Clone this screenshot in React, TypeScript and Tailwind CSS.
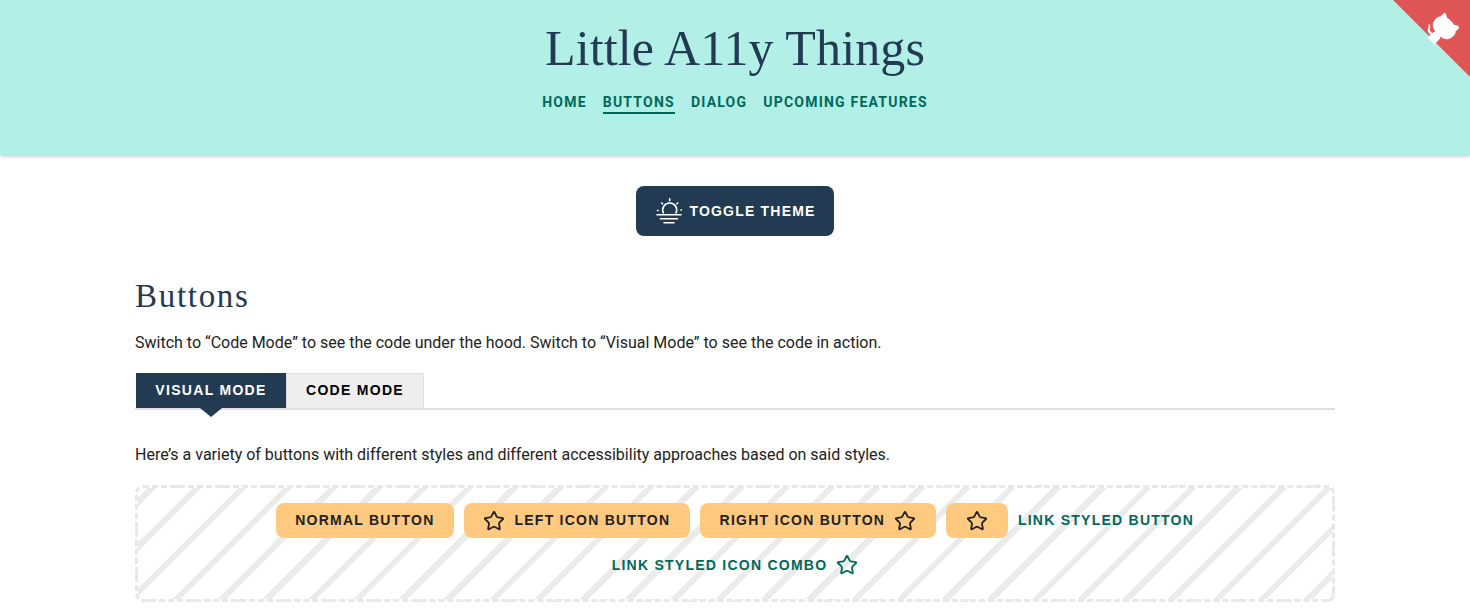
import { Star } from 'lucide-react';

const navItems = [
  { label: 'Home', active: false },
  { label: 'Buttons', active: true },
  { label: 'Dialog', active: false },
  { label: 'Upcoming Features', active: false },
];

function GithubCorner() {
  return (
    <svg viewBox="0 0 250 250" className="absolute top-0 right-0 w-[80px] h-[80px] fill-[#e05555] text-white">
      <path d="M9.4,0 L250,240.6 L250,0 Z" />
      <path
        fill="currentColor"
        d="M128.3,109.0 C113.8,99.7 119.0,89.6 119.0,89.6 C122.0,82.7 120.5,78.6 120.5,78.6 C119.2,72.0 123.4,76.3 123.4,76.3 C127.3,80.9 125.5,87.3 125.5,87.3 C122.9,97.6 130.6,101.9 134.4,103.2"
      />
      <path
        fill="currentColor"
        d="M115.0,115.0 C114.9,115.1 118.7,116.5 119.8,115.4 L133.7,101.6 C136.9,99.2 139.9,98.4 142.2,98.6 C133.8,88.0 127.5,74.4 143.8,58.0 C148.5,53.4 154.0,51.2 159.7,51.0 C160.3,49.4 163.2,43.6 171.4,40.1 C171.4,40.1 176.1,42.5 178.8,56.2 C183.1,58.6 187.2,61.8 190.9,65.4 C194.5,69.0 197.7,73.2 200.1,77.6 C213.8,80.2 216.3,84.9 216.3,84.9 C212.7,93.1 206.9,96.0 205.4,96.6 C205.1,102.4 203.0,107.8 198.3,112.5 C181.9,128.9 168.3,122.5 157.7,114.1 C157.9,116.9 156.7,120.9 152.7,124.9 L141.0,136.5 C139.8,137.7 141.6,141.9 141.8,141.8 Z"
      />
    </svg>
  );
}

function SunIcon() {
  return (
    <svg viewBox="0 0 26 26" fill="none" stroke="currentColor" strokeWidth="1.6" strokeLinecap="round" className="w-[26px] h-[26px]">
      <path d="M7.4 15A7 7 0 1 1 20 15" />
      <path d="M13.7 .8v2M5.7 5l.8.8M21.7 5l-.8.8M1.5 12.5h.6M25 12h.5" />
      <path d="M1 16.7h24M4.5 20.7h17M8 24.7h10" />
    </svg>
  );
}

const orangeBtn =
  'h-[35px] rounded-lg bg-[#ffca7f] text-[#222] flex items-center justify-center gap-[9px] text-[14px] font-bold uppercase tracking-[1.25px]';

export default function App() {
  return (
    <div className="relative min-h-[615px] bg-white font-['Roboto',sans-serif] text-[#222] overflow-hidden">
      <header className="h-[155px] bg-[#b2efe6] shadow-[0_1px_4px_rgba(0,0,0,0.25)] flex flex-col items-center">
        <h1 className="mt-[18px] font-['Liberation_Serif',serif] text-[50px] leading-[60px] tracking-[0.12px] text-[#233a53]">
          Little A11y Things
        </h1>
        <nav className="mt-[14px] flex items-center gap-4">
          {navItems.map((item) => (
            <a
              key={item.label}
              className={`text-[14px] leading-[20px] font-bold uppercase tracking-[1.22px] text-[#00695c] ${
                item.active ? 'border-b-2 border-[#00695c]' : 'border-b-2 border-transparent'
              }`}
            >
              {item.label}
            </a>
          ))}
        </nav>
      </header>
      <GithubCorner />

      <div className="flex justify-center mt-[31px]">
        <button className="w-[198px] h-[50px] pl-[2px] rounded-lg bg-[#233a53] text-white flex items-center justify-center gap-[7px] font-['Liberation_Sans',sans-serif] text-[14px] font-bold uppercase tracking-[1.2px]">
          <SunIcon />
          Toggle Theme
        </button>
      </div>

      <main className="w-[1200px] mx-auto mt-[41px]">
        <h2 className="font-['Liberation_Serif',serif] text-[33px] leading-[38px] tracking-[1.7px] text-[#233a53]">Buttons</h2>
        <p className="mt-[16px] text-[16px] leading-[24px]">
          Switch to “Code Mode” to see the code under the hood. Switch to “Visual Mode” to see the code in action.
        </p>

        <div className="mt-[18px] flex h-[37px] border-b-2 border-[#e0e0e0] font-['Liberation_Sans',sans-serif] text-[14px] font-bold uppercase tracking-[1.3px]">
          <div className="relative ml-px w-[150px] h-[35px] bg-[#233a53] text-white flex items-center justify-center">
            Visual Mode
            <span className="absolute left-[64px] top-[35px] border-x-[11px] border-t-[9px] border-x-transparent border-t-[#233a53]" />
          </div>
          <div className="w-[138px] h-[35px] pb-px bg-[#eeeeee] border border-b-0 border-[#e0e0e0] text-black flex items-center justify-center">
            Code Mode
          </div>
        </div>

        <p className="mt-[33px] text-[16px] leading-[24px]">
          Here’s a variety of buttons with different styles and different accessibility approaches based on said styles.
        </p>

        <div className="mt-[18px] h-[117px] rounded-lg border-[3px] border-dashed border-[#e8e8e8] bg-[repeating-linear-gradient(-45deg,transparent_0,transparent_14px,#ebebeb_14px,#ebebeb_20px,transparent_20px,transparent_32px)] flex flex-col items-center font-['Liberation_Sans',sans-serif]">
          <div className="mt-[15px] flex items-center gap-[10px]">
            <button className={`${orangeBtn} w-[178px]`}>Normal Button</button>
            <button className={`${orangeBtn} w-[226px]`}>
              <Star size={22} strokeWidth={2} />
              Left Icon Button
            </button>
            <button className={`${orangeBtn} w-[236px]`}>
              Right Icon Button
              <Star size={22} strokeWidth={2} />
            </button>
            <button className={`${orangeBtn} w-[62px]`}>
              <Star size={22} strokeWidth={2} />
            </button>
            <a className="text-[14px] font-bold uppercase tracking-[1.25px] text-[#00695c]">Link Styled Button</a>
          </div>
          <a className="mt-[16px] flex items-center gap-[9px] text-[14px] font-bold uppercase tracking-[1.25px] text-[#00695c]">
            Link Styled Icon Combo
            <Star size={22} strokeWidth={2} />
          </a>
        </div>
      </main>
    </div>
  );
}
